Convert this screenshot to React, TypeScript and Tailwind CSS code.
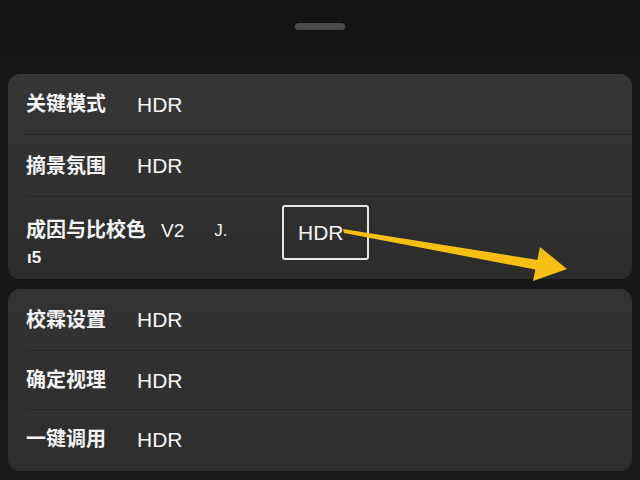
import React from "react";

const font = { fontFamily: '"Liberation Sans", "Noto Sans CJK SC", sans-serif' };

function Row({ label, h }: { label: string; h: string }) {
  return (
    <div className={`flex items-center pl-[18px] ${h}`}>
      <span className="w-[111px] text-[20px] leading-none text-[#f4f4f4] font-semibold">{label}</span>
      <span className="text-[21px] leading-none text-[#f4f4f4]">HDR</span>
    </div>
  );
}

function Divider() {
  return (
    <div className="pl-[18px]">
      <div className="h-px bg-[#262626]" />
    </div>
  );
}

export default function App() {
  return (
    <div
      className="relative w-[640px] h-[480px] overflow-hidden bg-[#161616] bg-gradient-to-b from-[#141414] to-[#1a1a1a]"
      style={font}
    >
      <div className="flex justify-center pt-[23px]">
        <div className="w-[50px] h-[7px] rounded-full bg-[#4a4a4a]" />
      </div>

      <div className="px-[8px] pt-[44px] flex flex-col gap-[10px]">
        <div className="rounded-[12px] bg-gradient-to-b from-[#363636] to-[#2c2c2c] overflow-hidden">
          <Row label="关键模式" h="h-[60px]" />
          <Divider />
          <Row label="摘景氛围" h="h-[61px]" />
          <Divider />
          <div className="flex h-[82px] pl-[18px] pt-[8px]">
            <div className="w-[256px] pt-[12px] text-[20px] leading-[27px] text-[#f4f4f4] font-semibold">
              <div className="flex">
                <span>成因与比校色</span>
                <span className="ml-[15px] text-[19px] font-normal">V2</span>
                <span className="ml-[30px] text-[17px] font-normal">J.</span>
              </div>
              <div className="text-[17px] pl-[1px]">ι5</div>
            </div>
            <div className="w-[87px] h-[55px] border-2 border-[#e6e6e6] rounded-[3px] flex items-center pl-[14px]">
              <span className="text-[21px] leading-none text-[#f4f4f4]">HDR</span>
            </div>
          </div>
        </div>

        <div className="rounded-[12px] bg-gradient-to-b from-[#333333] to-[#2e2e2e] overflow-hidden h-[182px]">
          <Row label="校霖设置" h="h-[61px]" />
          <Divider />
          <Row label="确定视理" h="h-[58px]" />
          <Divider />
          <Row label="一键调用" h="h-[58px]" />
        </div>
      </div>

      <svg className="absolute left-0 top-0" width="640" height="480" viewBox="0 0 640 480">
        <polygon points="343,229 344,233 538,270 538,260" fill="#f5c013" />
        <polygon points="540,247 567,269 533,281" fill="#f5c013" />
      </svg>
    </div>
  );
}
